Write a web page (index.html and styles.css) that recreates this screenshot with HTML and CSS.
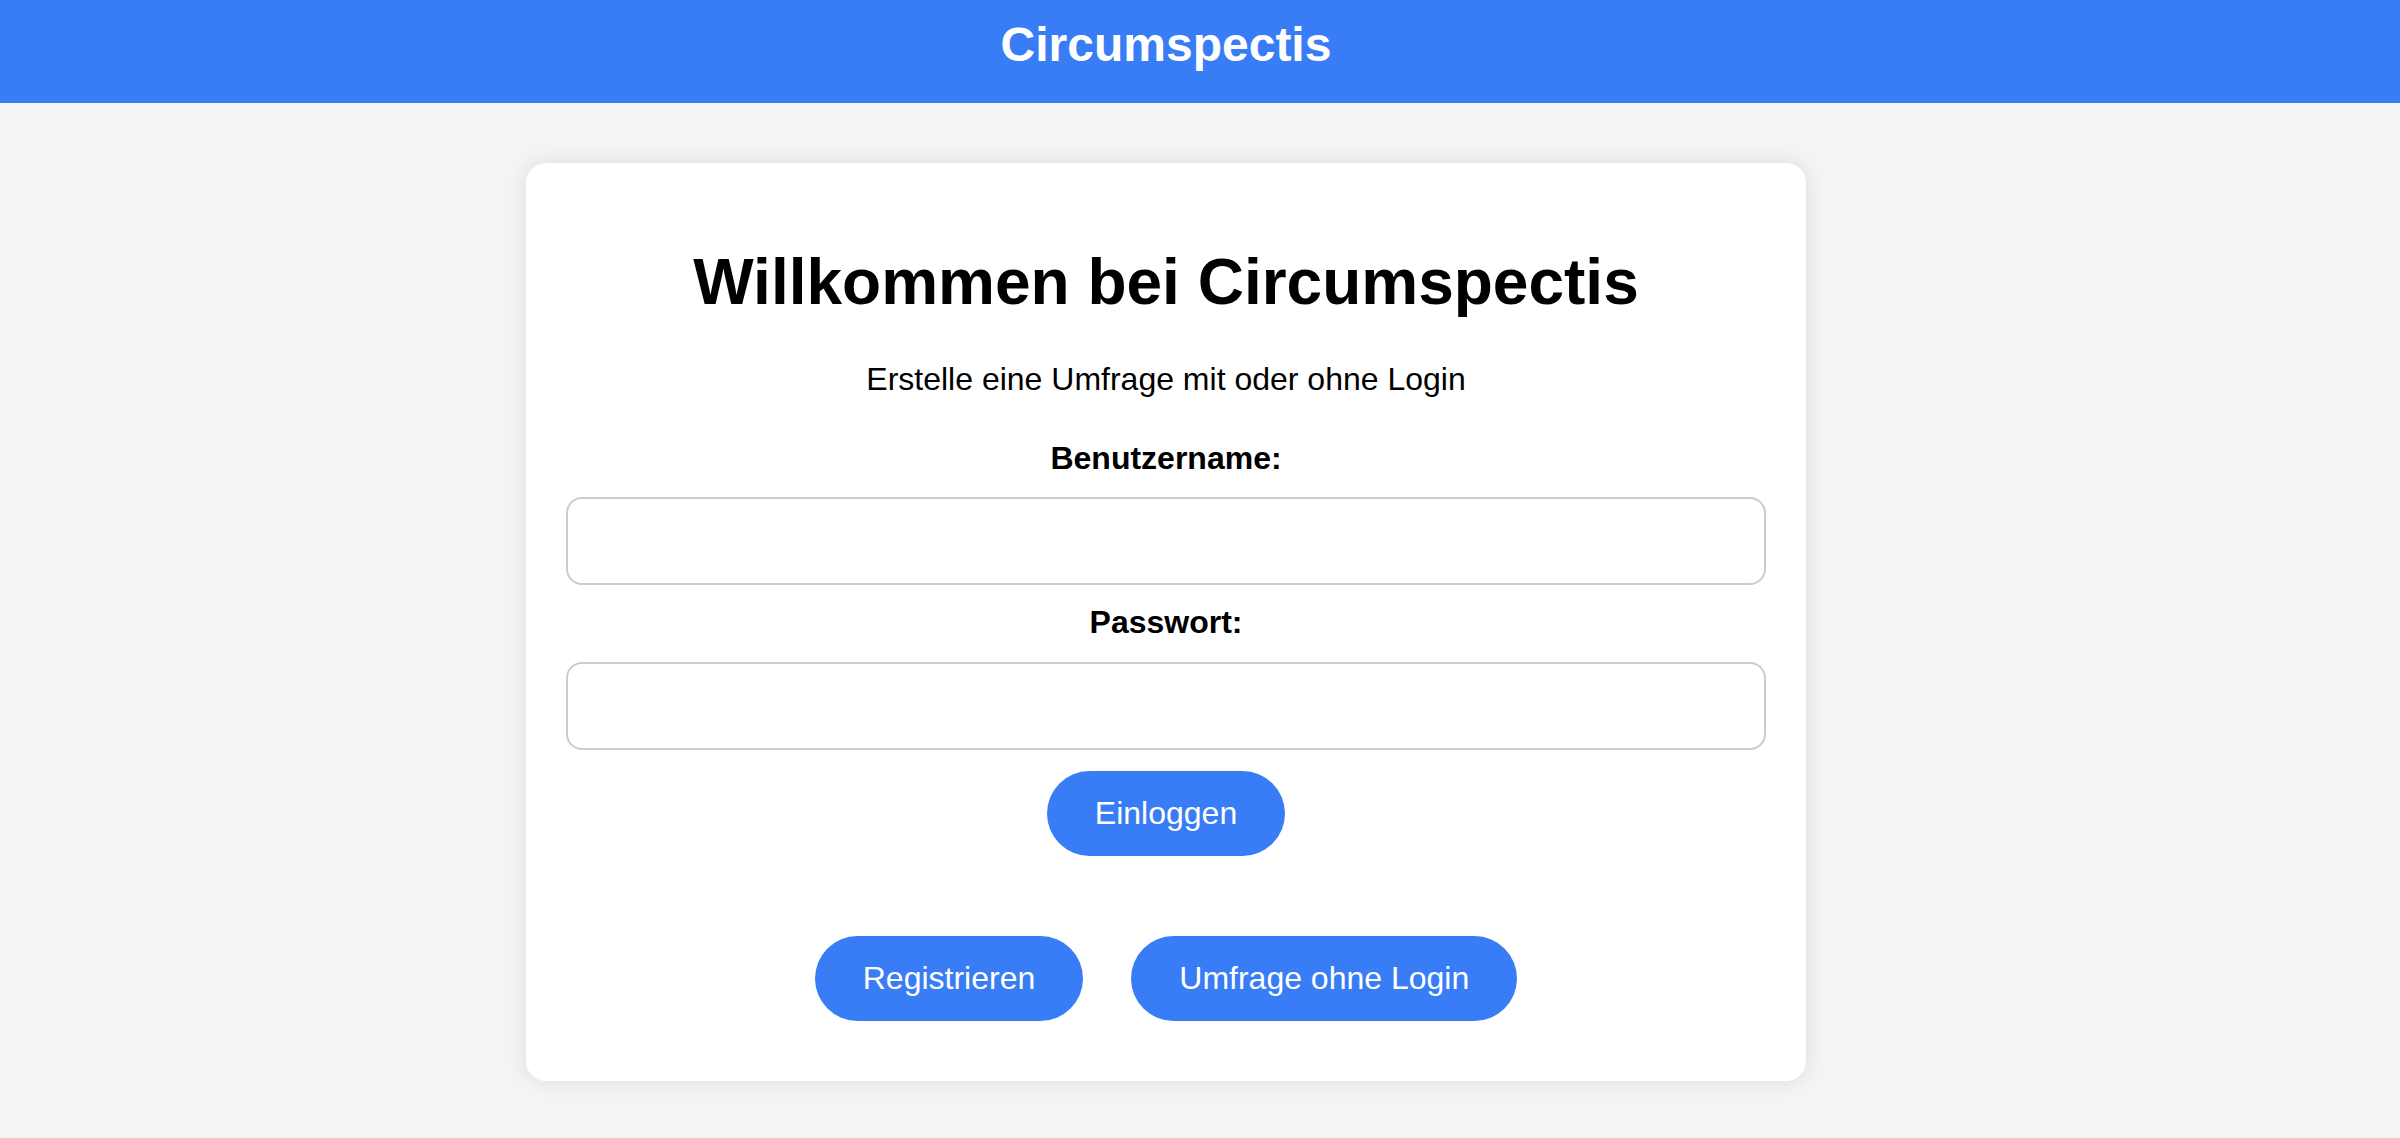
FILE: index.html
```html
<!DOCTYPE html>
<html lang="de">
<head>
<meta charset="utf-8">
<title>Circumspectis</title>
<link rel="stylesheet" href="styles.css">
</head>
<body>
<header class="site-header">
  <h1 class="site-title">Circumspectis</h1>
</header>
<main class="page">
  <section class="card">
    <h1 class="card-title">Willkommen bei Circumspectis</h1>
    <p class="card-subtitle">Erstelle eine Umfrage mit oder ohne Login</p>
    <form class="login-form">
      <label class="field-label field-label-first" for="username">Benutzername:</label>
      <input class="field-input field-input-first" id="username" type="text">
      <label class="field-label" for="password">Passwort:</label>
      <input class="field-input" id="password" type="password">
      <button class="btn btn-login" type="button">Einloggen</button>
    </form>
    <div class="actions">
      <button class="btn" type="button">Registrieren</button>
      <button class="btn" type="button">Umfrage ohne Login</button>
    </div>
  </section>
</main>
</body>
</html>
```

FILE: styles.css
```css
html, body {
  margin: 0;
  padding: 0;
}

body {
  background: #f4f4f4;
  font-family: "Liberation Sans", Arial, Helvetica, sans-serif;
  color: #000;
}

.site-header {
  background: #387cf6;
  height: 103px;
  box-sizing: border-box;
  padding: 17px 68px 0 0;
}

.site-title {
  margin: 0;
  text-align: center;
  color: #fff;
  font-size: 48px;
  line-height: 55px;
  font-weight: bold;
}

.page {
  padding: 60px 68px 40px 0;
  display: flex;
  justify-content: center;
}

.card {
  width: 1280px;
  box-sizing: border-box;
  background: #fff;
  border-radius: 20px;
  box-shadow: 0 0 20px rgba(0, 0, 0, 0.1);
  padding: 40px 40px 60px;
  display: flex;
  flex-direction: column;
  align-items: center;
  text-align: center;
}

.card-title {
  margin: 42px 0 0;
  font-size: 64px;
  line-height: 74px;
  font-weight: bold;
}

.card-subtitle {
  margin: 42px 0 0;
  font-size: 32px;
  line-height: 37px;
}

.login-form {
  width: 100%;
  display: flex;
  flex-direction: column;
  align-items: center;
}

.field-label {
  display: block;
  margin-top: 19px;
  font-size: 32px;
  line-height: 37px;
  font-weight: bold;
}

.field-label-first {
  margin-top: 42px;
}

.field-input {
  display: block;
  width: 100%;
  height: 88px;
  box-sizing: border-box;
  margin-top: 21px;
  border: 2px solid #cccccc;
  border-radius: 16px;
  background: #fff;
  font-size: 32px;
  font-family: inherit;
  padding: 0 20px;
}

.field-input-first {
  margin-top: 20px;
}

.btn {
  background: #387cf6;
  color: #fff;
  border: none;
  border-radius: 50px;
  font-family: "Liberation Sans", Arial, Helvetica, sans-serif;
  font-size: 32px;
  line-height: 37px;
  padding: 24px 48px;
  cursor: pointer;
}

.btn-login {
  margin-top: 21px;
}

.actions {
  margin-top: 80px;
  display: flex;
  justify-content: center;
  gap: 48px;
}
```
